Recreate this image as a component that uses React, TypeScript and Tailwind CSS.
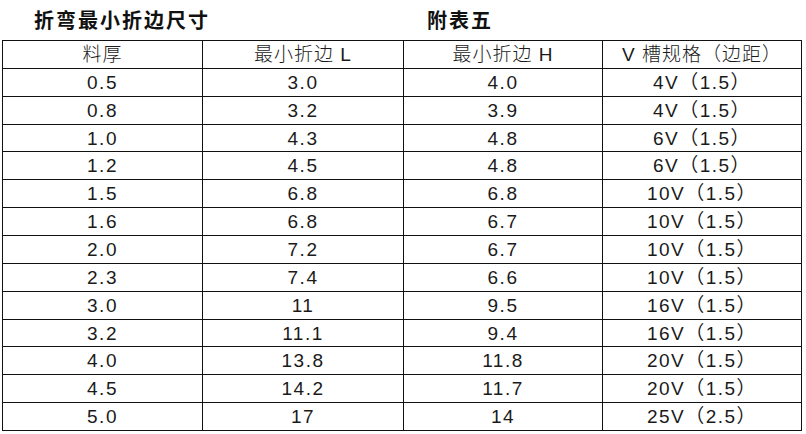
import React from "react";

const rows: [string, string, string, string][] = [
  ["0.5", "3.0", "4.0", "4V（1.5）"],
  ["0.8", "3.2", "3.9", "4V（1.5）"],
  ["1.0", "4.3", "4.8", "6V（1.5）"],
  ["1.2", "4.5", "4.8", "6V（1.5）"],
  ["1.5", "6.8", "6.8", "10V（1.5）"],
  ["1.6", "6.8", "6.7", "10V（1.5）"],
  ["2.0", "7.2", "6.7", "10V（1.5）"],
  ["2.3", "7.4", "6.6", "10V（1.5）"],
  ["3.0", "11", "9.5", "16V（1.5）"],
  ["3.2", "11.1", "9.4", "16V（1.5）"],
  ["4.0", "13.8", "11.8", "20V（1.5）"],
  ["4.5", "14.2", "11.7", "20V（1.5）"],
  ["5.0", "17", "14", "25V（2.5）"],
];

const cell = "border border-[#111] p-0 h-[27.86px] text-center align-middle";

export default function App() {
  return (
    <div className="w-[806px] h-[434px] bg-white overflow-hidden text-[#1a1a1a] font-['Liberation_Sans','Noto_Sans_CJK_SC',sans-serif]">
      <div className="flex items-center h-[40px] pl-[34px] font-['Noto_Sans_CJK_SC',sans-serif] font-bold text-[20px] tracking-[2px] text-[#111]">
        <span className="w-[393px]">折弯最小折边尺寸</span>
        <span>附表五</span>
      </div>
      <table className="ml-[2px] w-[799px] border-collapse table-fixed text-[19px] leading-none">
        <colgroup>
          <col className="w-[200px]" />
          <col className="w-[201px]" />
          <col className="w-[199px]" />
          <col className="w-[199px]" />
        </colgroup>
        <thead>
          <tr className="font-light tracking-[1px]">
            <th className={cell + " font-light"}>料厚</th>
            <th className={cell + " font-light"}>最小折边 L</th>
            <th className={cell + " font-light"}>最小折边 H</th>
            <th className={cell + " font-light"}>V 槽规格（边距）</th>
          </tr>
        </thead>
        <tbody>
          {rows.map((r, i) => (
            <tr key={i} className="tracking-[1.5px]">
              {r.map((v, j) => (
                <td key={j} className={cell}>
                  {v}
                </td>
              ))}
            </tr>
          ))}
        </tbody>
      </table>
    </div>
  );
}
